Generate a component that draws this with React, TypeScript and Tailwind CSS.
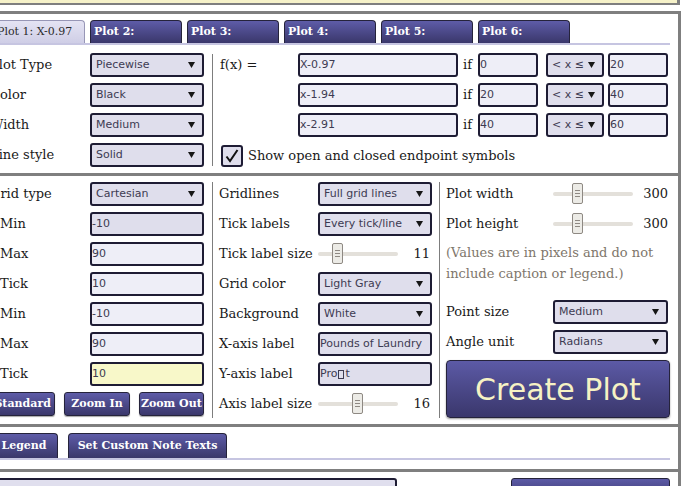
import React from "react";

function Arrow() {
  return (
    <svg width="7" height="6" viewBox="0 0 7 6" className="shrink-0">
      <polygon points="0,0 7,0 3.5,6" fill="#161616" />
    </svg>
  );
}

function Select({ text, w = "w-[114px]" }: { text: string; w?: string }) {
  return (
    <div
      className={`${w} h-[24px] shrink-0 flex items-center justify-between rounded-[3px] border-2 border-[#1e1c34] bg-[#dfdeec] pl-[4px] pr-[7px] font-['DejaVu_Sans',sans-serif] text-[11px] text-[#3d3b52] whitespace-nowrap`}
    >
      <span>{text}</span>
      <Arrow />
    </div>
  );
}

function Input({
  children,
  w = "w-[114px]",
  bg = "bg-[#eeeef7]",
}: {
  children: React.ReactNode;
  w?: string;
  bg?: string;
}) {
  return (
    <div
      className={`${w} ${bg} h-[24px] shrink-0 flex items-center rounded-[3px] border-2 border-[#1e1c34] font-['DejaVu_Sans',sans-serif] text-[11px] text-[#3d3b52] whitespace-nowrap overflow-hidden`}
    >
      {children}
    </div>
  );
}

function Slider({ thumb }: { thumb: string }) {
  return (
    <div className="relative w-[80px] h-[24px] shrink-0 flex items-center">
      <div className="w-full h-[4px] rounded-full bg-[#e3e0da]" />
      <div
        className={`absolute top-[1px] ${thumb} w-[11px] h-[21px] rounded-[2px] border border-[#8e8983] bg-[#ecebe6] flex flex-col items-center justify-center gap-[2px]`}
      >
        <div className="w-[5px] h-px bg-[#8e8983]" />
        <div className="w-[5px] h-px bg-[#8e8983]" />
        <div className="w-[5px] h-px bg-[#8e8983]" />
      </div>
    </div>
  );
}

function LRow({
  label,
  children,
  lw = "w-[100px]",
  lcls = "",
}: {
  label: React.ReactNode;
  children: React.ReactNode;
  lw?: string;
  lcls?: string;
}) {
  return (
    <div className="flex items-center h-[24px]">
      <span className={`${lw} ${lcls} shrink-0 whitespace-nowrap`}>{label}</span>
      {children}
    </div>
  );
}

function Tab({ text, active = false }: { text: string; active?: boolean }) {
  if (active) {
    return (
      <div className="w-[92px] h-[23px] shrink-0 flex items-center pl-[3px] rounded-t-[4px] border border-b-0 border-[#9796b6] bg-linear-to-b from-[#e4e3f3] to-[#cfcee6] text-[11px] text-[#2b2b2b] whitespace-nowrap">
        {text}
      </div>
    );
  }
  return (
    <div className="w-[92px] h-[23px] shrink-0 flex items-center pl-[3px] rounded-t-[4px] border border-b-0 border-[#25233b] bg-linear-to-b from-[#5e5ca8] to-[#3a376b] text-[11px] font-bold text-white whitespace-nowrap">
      {text}
    </div>
  );
}

function Btn({ text, w }: { text: string; w: string }) {
  return (
    <div
      className={`${w} h-[24px] shrink-0 flex items-center justify-center rounded-[3px] border border-[#25233b] bg-linear-to-b from-[#5e5ca8] to-[#3a376b] text-[11px] font-bold text-white whitespace-nowrap shadow-[0_1px_1px_rgba(0,0,0,0.35)]`}
    >
      {text}
    </div>
  );
}

export default function App() {
  return (
    <div className="w-[689px] h-[486px] overflow-hidden bg-white font-['DejaVu_Serif',serif] text-[13px] text-[#1a1a1a]">
      <div className="ml-[-10px] w-[691px]">
        {/* yellow strip */}
        <div className="h-[5px] mr-[1px] bg-[#f6f2c9] border-b-2 border-r-[3px] border-[#7f7f7f]" />

        <div className="mt-[6px] border-t-[3px] border-r-[3px] border-[#7f7f7f]">
          {/* Section 1 */}
          <div className="pt-[6px] pb-[6px] pr-[8px] border-b-[3px] border-[#7f7f7f]">
            <div className="flex gap-[5px] pl-[3px] border-b-2 border-[#c6c5e1]">
              <Tab text="Plot 1: X-0.97" active />
              <Tab text="Plot 2:" />
              <Tab text="Plot 3:" />
              <Tab text="Plot 4:" />
              <Tab text="Plot 5:" />
              <Tab text="Plot 6:" />
            </div>
            <div className="mt-[8px] flex">
              <div className="w-[214px] shrink-0 flex flex-col gap-[6px]">
                <LRow label="Plot Type">
                  <Select text="Piecewise" />
                </LRow>
                <LRow label="Color">
                  <Select text="Black" />
                </LRow>
                <LRow label="Width">
                  <Select text="Medium" />
                </LRow>
                <LRow label="Line style">
                  <Select text="Solid" />
                </LRow>
              </div>
              <div className="ml-[8px] w-px bg-[#7d7d7d] my-[1px]" />
              <div className="pl-[7px] flex flex-col gap-[6px]">
                {[
                  ["X-0.97", "0", "20"],
                  ["x-1.94", "20", "40"],
                  ["x-2.91", "40", "60"],
                ].map((r, i) => (
                  <div key={i} className="flex items-center h-[24px]">
                    <span className="w-[78px] shrink-0">{i === 0 ? "f(x) =" : ""}</span>
                    <Input w="w-[160px]">{r[0]}</Input>
                    <span className="w-[20px] shrink-0 pl-[5px]">if</span>
                    <Input w="w-[60px]">{r[1]}</Input>
                    <div className="ml-[8px]">
                      <Select text="< x ≤" w="w-[58px]" />
                    </div>
                    <div className="ml-[4px]">
                      <Input w="w-[60px]">{r[2]}</Input>
                    </div>
                  </div>
                ))}
                <div className="flex items-center h-[24px] pt-[2px]">
                  <div className="ml-[1px] w-[22px] h-[22px] shrink-0 rounded-[3px] border-2 border-[#1e1c34] bg-[#dfdeec] flex items-center justify-center">
                    <svg width="16" height="16" viewBox="0 0 16 16">
                      <path d="M2.5 8.5 L6 13 L13.5 2" fill="none" stroke="#111" strokeWidth="2" strokeLinejoin="miter" />
                    </svg>
                  </div>
                  <span className="ml-[5px] whitespace-nowrap">Show open and closed endpoint symbols</span>
                </div>
              </div>
            </div>
          </div>

          {/* Section 2 */}
          <div className="pt-[6px] pb-[6px] pr-[8px] border-b-[3px] border-[#7f7f7f] flex">
            <div className="w-[214px] shrink-0 flex flex-col gap-[6px]">
              <LRow label="Grid type">
                <Select text="Cartesian" />
              </LRow>
              <LRow label="Min" lcls="pl-[10px]">
                <Input bg="bg-[#dfdeec]">-10</Input>
              </LRow>
              <LRow label="Max" lcls="pl-[10px]">
                <Input>90</Input>
              </LRow>
              <LRow label="Tick" lcls="pl-[10px]">
                <Input>10</Input>
              </LRow>
              <LRow label="Min" lcls="pl-[10px]">
                <Input>-10</Input>
              </LRow>
              <LRow label="Max" lcls="pl-[10px]">
                <Input>90</Input>
              </LRow>
              <LRow label="Tick" lcls="pl-[10px]">
                <Input bg="bg-[#f8f8c9]">10</Input>
              </LRow>
              <div className="grid grid-cols-3 gap-[9px]">
                <Btn text="Standard" w="w-full" />
                <Btn text="Zoom In" w="w-full" />
                <Btn text="Zoom Out" w="w-full" />
              </div>
            </div>
            <div className="ml-[8px] w-px bg-[#7d7d7d]" />
            <div className="w-[226px] shrink-0 pl-[6px] pr-[8px] flex flex-col gap-[6px]">
              <LRow label="Gridlines" lw="w-[99px]">
                <Select text="Full grid lines" />
              </LRow>
              <LRow label="Tick labels" lw="w-[99px]">
                <Select text="Every tick/line" />
              </LRow>
              <LRow label="Tick label size" lw="w-[99px]">
                <Slider thumb="left-[14px]" />
                <span className="flex-1 text-right pr-[1px]">11</span>
              </LRow>
              <LRow label="Grid color" lw="w-[99px]">
                <Select text="Light Gray" />
              </LRow>
              <LRow label="Background" lw="w-[99px]">
                <Select text="White" />
              </LRow>
              <LRow label="X-axis label" lw="w-[99px]">
                <Input bg="bg-[#dfdeec]">Pounds of Laundry</Input>
              </LRow>
              <LRow label="Y-axis label" lw="w-[99px]">
                <Input bg="bg-[#dfdeec]">
                  Pro
                  <span className="inline-block w-[6px] h-[9px] mx-px border border-[#3d3b52]" />
                  t
                </Input>
              </LRow>
              <LRow label="Axis label size" lw="w-[99px]">
                <Slider thumb="left-[34px]" />
                <span className="flex-1 text-right pr-[1px]">16</span>
              </LRow>
            </div>
            <div className="w-px bg-[#7d7d7d]" />
            <div className="flex-1 pl-[6px] flex flex-col">
              <LRow label="Plot width" lw="w-[107px]">
                <Slider thumb="left-[19px]" />
                <span className="flex-1 text-right pr-[2px]">300</span>
              </LRow>
              <div className="mt-[6px]">
                <LRow label="Plot height" lw="w-[107px]">
                  <Slider thumb="left-[19px]" />
                  <span className="flex-1 text-right pr-[2px]">300</span>
                </LRow>
              </div>
              <div className="mt-[6px] leading-[21px] text-[#7e766b]">
                (Values are in pixels and do not
                <br />
                include caption or legend.)
              </div>
              <div className="mt-[16px]">
                <LRow label="Point size" lw="w-[107px]">
                  <Select text="Medium" w="w-[115px]" />
                </LRow>
              </div>
              <div className="mt-[6px]">
                <LRow label="Angle unit" lw="w-[107px]">
                  <Select text="Radians" w="w-[115px]" />
                </LRow>
              </div>
              <div className="mt-[6px] h-[58px] rounded-[4px] border border-[#25233b] bg-linear-to-b from-[#5c5aa6] to-[#3a376c] flex items-center justify-center font-['DejaVu_Sans',sans-serif] text-[30px] text-[#f6f2c4] shadow-[0_1px_2px_rgba(0,0,0,0.4)]">
                Create Plot
              </div>
            </div>
          </div>

          {/* Section 3 */}
          <div className="pt-[6px] pb-[9px] pr-[8px] border-b-[3px] border-[#7f7f7f]">
            <div className="flex gap-[10px] border-b-2 border-[#c6c5e1]">
              <div className="w-[68px] h-[25px] shrink-0 flex items-center justify-center rounded-t-[4px] border border-b-0 border-[#25233b] bg-linear-to-b from-[#5e5ca8] to-[#3a376b] text-[11px] font-bold text-white">
                Legend
              </div>
              <div className="w-[159px] h-[25px] shrink-0 flex items-center justify-center rounded-t-[4px] border border-b-0 border-[#25233b] bg-linear-to-b from-[#5e5ca8] to-[#3a376b] text-[11px] font-bold text-white whitespace-nowrap">
                Set Custom Note Texts
              </div>
            </div>
          </div>

          {/* Section 4 */}
          <div className="pt-[6px] pr-[8px] h-[40px] flex items-start">
            <div className="w-[407px] h-[24px] rounded-[3px] border-2 border-[#1e1c34] bg-[#e0dfee]" />
            <div className="ml-auto w-[159px] h-[24px] rounded-[3px] border border-[#25233b] bg-linear-to-b from-[#5c5aa6] to-[#3a376c]" />
          </div>
        </div>
      </div>
    </div>
  );
}
